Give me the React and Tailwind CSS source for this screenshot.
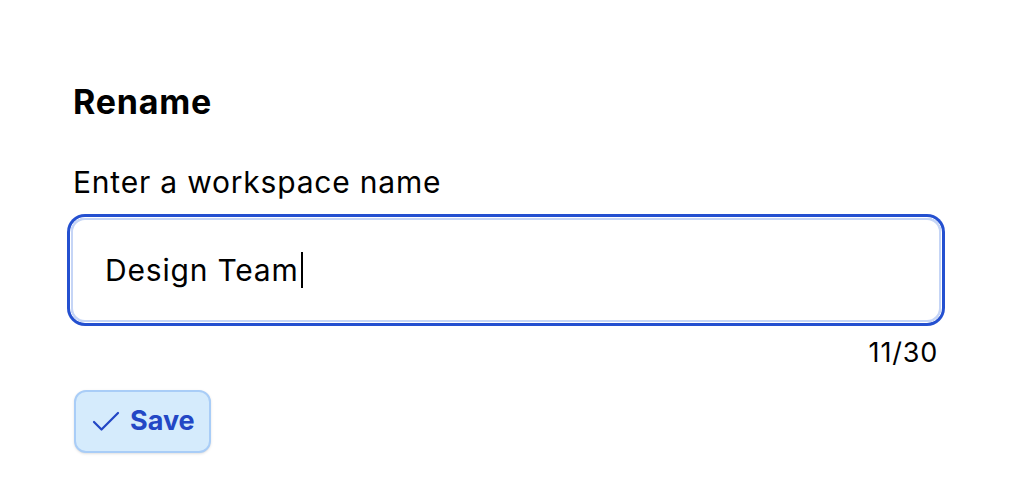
import { Check } from "lucide-react";

export default function App() {
	return (
		<div className="min-h-[500px] bg-white px-[71px] pt-[82px] font-['Inter',sans-serif] text-black">
			<h2 className="pl-[2px] text-[34px] font-bold leading-[40px] tracking-[0.8px]">
				Rename
			</h2>
			<label className="mt-[40px] block pl-[2px] text-[30px] leading-[40px] tracking-[0.8px]">
				Enter a workspace name
			</label>
			<div className="mt-[16px] flex h-[104px] items-center rounded-[14px] border-2 border-[#c5d5f6] px-[32px] ring-[3px] ring-[#2450d0] ring-offset-[1px]">
				<span className="text-[30px] leading-[40px] tracking-[0.8px]">
					Design Team
				</span>
				<span className="ml-[2px] h-[36px] w-[2px] bg-black" />
			</div>
			<div className="mt-[13px] pr-[3px] text-right text-[27px] leading-[36px] tracking-[0.8px]">
				11/30
			</div>
			<button className="ml-[3px] mt-[19px] flex h-[63px] items-center gap-[6px] rounded-[12px] border-2 border-[#a9cdf7] bg-[#d5ebfc] pl-[12px] pr-[14px] text-[27px] font-bold text-[#2347c5] shadow-sm">
				<Check size={36} strokeWidth={1.5} />
				Save
			</button>
		</div>
	);
}
